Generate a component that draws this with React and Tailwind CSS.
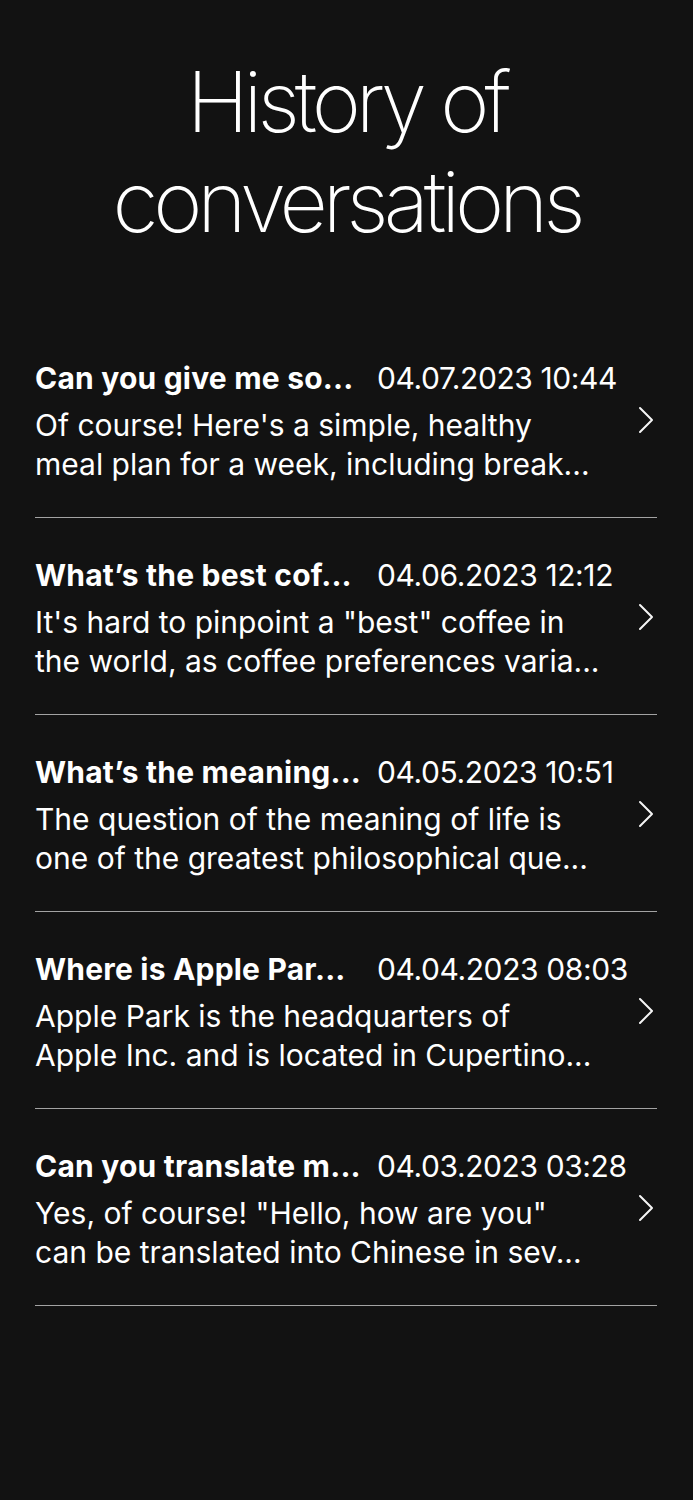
import React from 'react';

const conversations = [
  {
    title: 'Can you give me so...',
    date: '04.07.2023 10:44',
    lines: ["Of course! Here's a simple, healthy", 'meal plan for a week, including break...'],
  },
  {
    title: 'What’s the best cof...',
    date: '04.06.2023 12:12',
    lines: ['It\'s hard to pinpoint a "best" coffee in', 'the world, as coffee preferences varia...'],
  },
  {
    title: 'What’s the meaning...',
    date: '04.05.2023 10:51',
    lines: ['The question of the meaning of life is', 'one of the greatest philosophical que...'],
  },
  {
    title: 'Where is Apple Par...',
    date: '04.04.2023 08:03',
    lines: ['Apple Park is the headquarters of', 'Apple Inc. and is located in Cupertino...'],
  },
  {
    title: 'Can you translate m...',
    date: '04.03.2023 03:28',
    lines: ['Yes, of course! "Hello, how are you"', 'can be translated into Chinese in sev...'],
  },
];

const Chevron = () => (
  <svg width="16" height="28" viewBox="0 0 16 28" fill="none" className="shrink-0">
    <polyline points="2,2 14,14 2,26" stroke="#f5f5f5" strokeWidth="2" strokeLinecap="round" strokeLinejoin="round" />
  </svg>
);

const Row = ({ item }) => (
  <div className="pt-[40px] pb-[33px] border-b border-[#a3a3a3] flex items-center">
    <div className="flex-1 min-w-0">
      <div className="flex items-baseline leading-[34px] whitespace-nowrap">
        <span className="w-[342px] shrink-0 text-[30px] font-bold text-white tracking-[0.2px]">{item.title}</span>
        <span className="text-[30px] text-white font-normal tracking-[-0.4px]">{item.date}</span>
      </div>
      <div className="mt-[11px] text-[30px] leading-[39px] text-white">
        {item.lines.map((l) => (
          <div key={l} className="whitespace-nowrap">{l}</div>
        ))}
      </div>
    </div>
    <div className="pr-[3px] pb-[6px]">
      <Chevron />
    </div>
  </div>
);

export default function App() {
  return (
    <div
      className="min-h-[1500px] w-full bg-[#121212] text-white"
      style={{ fontFamily: 'Inter, "Noto Sans", sans-serif' }}
    >
      <h1 className="pt-[52px] text-center text-[84px] leading-[100px] font-extralight tracking-[-5.1px] text-white">
        History of
        <br />
        conversations
      </h1>
      <div className="mt-[69px] pl-[35px] pr-[36px]">
        {conversations.map((c) => (
          <Row key={c.date} item={c} />
        ))}
      </div>
    </div>
  );
}
